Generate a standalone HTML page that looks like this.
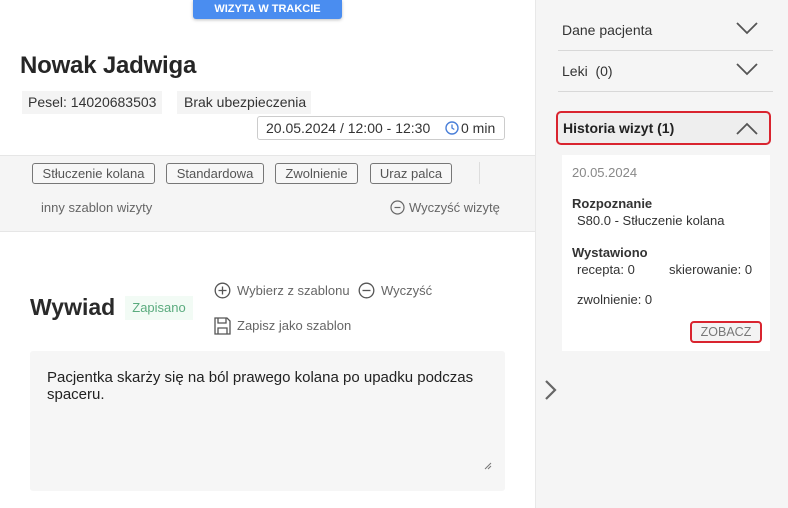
<!DOCTYPE html>
<html><head><meta charset="utf-8"><style>
*{box-sizing:border-box;margin:0;padding:0}
body{width:788px;height:508px;overflow:hidden;background:#fff;font-family:"Liberation Sans",Arial,sans-serif;position:relative;color:#222}
.a{position:absolute}
.chip{position:absolute;top:163px;height:21px;border:1px solid #777;border-radius:3px;font-size:13px;color:#555;text-align:center;line-height:19px;background:#f7f7f7}
.g{color:#666;font-size:13px}
</style></head><body>
<div class="a" style="left:193px;top:0;width:149px;height:19px;background:#4a8df0;border-radius:0 0 3px 3px;color:#fff;font-size:11px;font-weight:bold;text-align:center;line-height:19px;box-shadow:0 1px 3px rgba(0,0,0,.25)">WIZYTA W TRAKCIE</div>
<div class="a" style="left:20px;top:52px;font-size:24px;font-weight:bold;color:#262626;letter-spacing:-0.2px">Nowak Jadwiga</div>
<div class="a" style="left:22px;top:91px;width:140px;height:23px;background:#f4f4f4;font-size:14px;line-height:23px;padding-left:6px;color:#333">Pesel: 14020683503</div>
<div class="a" style="left:177px;top:91px;width:134px;height:23px;background:#f4f4f4;font-size:14px;line-height:23px;padding-left:7px;color:#333">Brak ubezpieczenia</div>
<div class="a" style="left:257px;top:116px;width:248px;height:24px;border:1px solid #ccc;border-radius:3px;font-size:14px;line-height:22px;padding-left:8px;color:#333">20.05.2024 / 12:00 - 12:30
<svg style="position:absolute;left:187px;top:4px" width="14" height="14" viewBox="0 0 14 14"><circle cx="7" cy="7" r="6" fill="none" stroke="#4a7fd8" stroke-width="1.4"/><path d="M7 3.5V7l2.3 1.5" fill="none" stroke="#4a7fd8" stroke-width="1.3"/></svg>
<span style="position:absolute;left:203px">0 min</span></div>
<div class="a" style="left:0;top:155px;width:536px;height:77px;background:#f5f5f5;border-top:1px solid #e6e6e6;border-bottom:1px solid #e6e6e6"></div>
<div class="chip" style="left:32px;width:123px">Stłuczenie kolana</div>
<div class="chip" style="left:166px;width:98px">Standardowa</div>
<div class="chip" style="left:275px;width:83px">Zwolnienie</div>
<div class="chip" style="left:370px;width:82px">Uraz palca</div>
<div class="a" style="left:479px;top:162px;width:1px;height:22px;background:#ddd"></div>
<div class="a g" style="left:41px;top:200px">inny szablon wizyty</div>
<svg class="a" style="left:390px;top:200px" width="15" height="15" viewBox="0 0 15 15"><circle cx="7.5" cy="7.5" r="6.5" fill="none" stroke="#666" stroke-width="1.2"/><path d="M4.5 7.5h6" stroke="#666" stroke-width="1.2"/></svg>
<div class="a g" style="left:409px;top:200px">Wyczyść wizytę</div>
<div class="a" style="left:30px;top:294px;font-size:23px;font-weight:bold;color:#2a2a2a">Wywiad</div>
<div class="a" style="left:125px;top:296px;width:68px;height:24px;background:#f2fbf5;color:#5aab7e;font-size:13px;line-height:24px;text-align:center">Zapisano</div>
<svg class="a" style="left:214px;top:282px" width="17" height="17" viewBox="0 0 17 17"><circle cx="8.5" cy="8.5" r="7.3" fill="none" stroke="#555" stroke-width="1.3"/><path d="M8.5 4.5v8M4.5 8.5h8" stroke="#555" stroke-width="1.3"/></svg>
<div class="a g" style="left:237px;top:283px">Wybierz z szablonu</div>
<svg class="a" style="left:358px;top:282px" width="17" height="17" viewBox="0 0 17 17"><circle cx="8.5" cy="8.5" r="7.3" fill="none" stroke="#555" stroke-width="1.3"/><path d="M4.5 8.5h8" stroke="#555" stroke-width="1.3"/></svg>
<div class="a g" style="left:381px;top:283px">Wyczyść</div>
<svg class="a" style="left:214px;top:317px" width="17" height="18" viewBox="0 0 17 18"><path d="M1 1h12l3 3v13H1z" fill="none" stroke="#555" stroke-width="1.3"/><path d="M4 1v5h8V1M4 17v-6h9v6" fill="none" stroke="#555" stroke-width="1.3"/></svg>
<div class="a g" style="left:237px;top:318px">Zapisz jako szablon</div>
<div class="a" style="left:30px;top:351px;width:475px;height:140px;background:#f6f6f6;border-radius:3px;font-size:15px;line-height:17px;padding:18px 17px;color:#222">Pacjentka skarży się na ból prawego kolana po upadku podczas spaceru.</div>
<svg class="a" style="left:484px;top:462px" width="8" height="8"><path d="M1 7L7 1M4 7L7 4" stroke="#777"/></svg>
<div class="a" style="left:535px;top:0;width:253px;height:508px;background:#f5f5f5;border-left:1px solid #e8e8e8"></div>
<div class="a" style="left:562px;top:22px;font-size:14px;color:#333">Dane pacjenta</div>
<svg class="a" style="left:736px;top:22px" width="22" height="13"><path d="M1 1l10 10L21 1" fill="none" stroke="#555" stroke-width="1.8"/></svg>
<div class="a" style="left:558px;top:50px;width:215px;height:1px;background:#d8d8d8"></div>
<div class="a" style="left:562px;top:63px;font-size:14px;color:#333">Leki&nbsp; (0)</div>
<svg class="a" style="left:736px;top:63px" width="22" height="13"><path d="M1 1l10 10L21 1" fill="none" stroke="#555" stroke-width="1.8"/></svg>
<div class="a" style="left:558px;top:91px;width:215px;height:1px;background:#d8d8d8"></div>
<div class="a" style="left:556px;top:111px;width:215px;height:34px;border:2px solid #d9242f;border-radius:5px;background:#eee;font-size:14px;font-weight:bold;line-height:30px;padding-left:5px;color:#222">Historia wizyt (1)</div>
<svg class="a" style="left:736px;top:122px" width="22" height="13"><path d="M1 12L11 2l10 10" fill="none" stroke="#555" stroke-width="1.8"/></svg>
<div class="a" style="left:562px;top:155px;width:208px;height:196px;background:#fff"></div>
<div class="a" style="left:572px;top:165px;font-size:13px;color:#888">20.05.2024</div>
<div class="a" style="left:572px;top:196px;font-size:13px;font-weight:bold;color:#333">Rozpoznanie</div>
<div class="a" style="left:577px;top:213px;font-size:13px;color:#333">S80.0 - Stłuczenie kolana</div>
<div class="a" style="left:572px;top:245px;font-size:13px;font-weight:bold;color:#333">Wystawiono</div>
<div class="a" style="left:577px;top:262px;font-size:13px;color:#333">recepta: 0</div>
<div class="a" style="left:669px;top:262px;font-size:13px;color:#333">skierowanie: 0</div>
<div class="a" style="left:577px;top:292px;font-size:13px;color:#333">zwolnienie: 0</div>
<div class="a" style="left:690px;top:321px;width:72px;height:22px;border:2px solid #d9242f;border-radius:4px;background:#f3f3f3;font-size:12.5px;line-height:18px;text-align:center;color:#777">ZOBACZ</div>
<svg class="a" style="left:544px;top:379px" width="13" height="22"><path d="M2 2l9 9-9 9" fill="none" stroke="#666" stroke-width="2.2"/></svg>
</body></html>
